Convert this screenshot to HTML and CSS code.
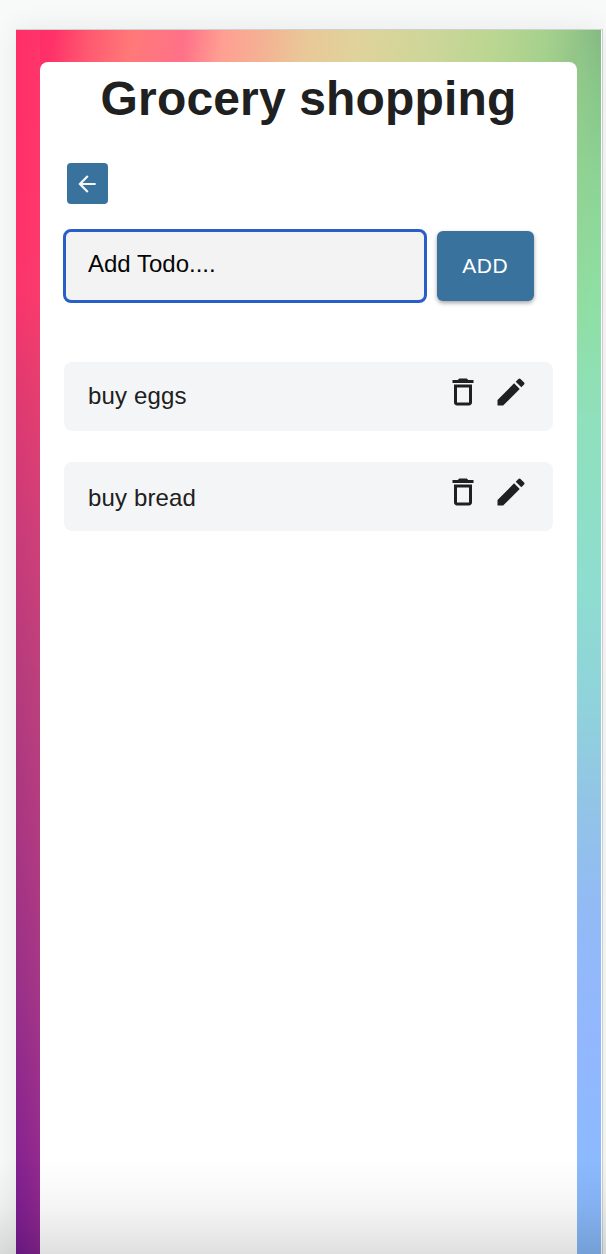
FILE: index.html
```html
<!DOCTYPE html>
<html lang="en">
<head>
<meta charset="utf-8">
<title>Grocery shopping</title>
<link rel="stylesheet" href="styles.css">
</head>
<body>
<svg class="sprite" aria-hidden="true">
  <symbol id="trash" viewBox="0 0 24 24"><path d="M6 19c0 1.1.9 2 2 2h8c1.1 0 2-.9 2-2V7H6v12zM8 9h8v10H8V9zm7.5-5l-1-1h-5l-1 1H5v2h14V4z"/></symbol>
  <symbol id="pencil" viewBox="0 0 24 24"><path d="M3 17.25V21h3.75L17.81 9.94l-3.75-3.75L3 17.25zM20.71 7.04c.39-.39.39-1.02 0-1.41l-2.34-2.34a.996.996 0 0 0-1.41 0l-1.83 1.83 3.75 3.75 1.83-1.83z"/></symbol>
  <symbol id="back" viewBox="0 0 24 24"><path d="M20 11H7.83l5.59-5.59L12 4l-8 8 8 8 1.41-1.41L7.83 13H20v-2z"/></symbol>
</svg>
<div class="frame">
  <main class="card">
    <h1 class="title">Grocery shopping</h1>
    <button class="back" aria-label="Back"><svg class="back-icon"><use href="#back"/></svg></button>
    <form class="entry">
      <input class="field" type="text" placeholder="Add Todo....">
      <button class="add" type="button">ADD</button>
    </form>
    <ul class="todos">
      <li class="todo"><span class="label">buy eggs</span><svg class="icon"><use href="#trash"/></svg><svg class="icon"><use href="#pencil"/></svg></li>
      <li class="todo todo-low"><span class="label">buy bread</span><svg class="icon"><use href="#trash"/></svg><svg class="icon"><use href="#pencil"/></svg></li>
    </ul>
  </main>
</div>
<div class="fade"></div>
</body>
</html>
```
FILE: styles.css
```css
* { box-sizing: border-box; }
body {
  margin: 0;
  height: 1254px;
  padding: 29px 3px 0 16px;
  overflow: hidden;
  font-family: "Liberation Sans", Arial, sans-serif;
  color: #202020;
  background: #f8faf9;
}
.sprite { position: absolute; width: 0; height: 0; }
/* multicolour backdrop: top strip plus left and right columns */
.frame {
  height: 1245px;
  padding: 32px 25px 0 24px;
  border-top: 1px solid #cfd1d1;
  border-right: 1px solid #cdcdcf;
  background:
    linear-gradient(#fff, #fff) right / 1px 100% no-repeat,
    linear-gradient(98deg, #ff2d68 0, #ff3268 14px, #ff5a70 51px, #ff7979 93px, #ff7188 144px, #ff9e92 182px, #f3b493 227px, #e9c897 265px, #dfd39b 320px, #cdd698 387px, #b9d691 455px, #a4d08d 505px, #92c487 537px) 24px 0 / 537px 42px no-repeat,
    linear-gradient(90deg, transparent, rgba(255,110,115,.12)) left / 24px 100% no-repeat,
    linear-gradient(#ff2d68 0, #ff306a 180px, #fa346c 260px, #e3386f 350px, #c93a79 500px, #b43a7d 650px, #a83582 800px, #982f89 960px, #882390 1110px, #7b1d92 1200px, #751b92 1224px) left top / 24px 100% no-repeat,
    radial-gradient(ellipse 24px 370px at 0 0, rgba(160,208,140,.5), transparent) 561px 0 / 24px 370px no-repeat,
    linear-gradient(#84b982 0, #86c68a 60px, #8bd496 150px, #8fdfa4 270px, #8fe0bc 390px, #8eddd0 560px, #90d2dc 680px, #92c5e5 770px, #92baf5 880px, #92b7ff 1010px, #8bbaff 1140px, #85b6f5 1224px) 561px 0 / 24px 100% no-repeat;
  box-shadow: 0 0 28px rgba(0,0,0,.07);
}
.card {
  height: 100%;
  padding: 0 24px;
  border-radius: 8px 8px 0 0;
  background: #fff;
}
.title {
  margin: 0 -20px;
  padding-top: 9px;
  font-size: 48px;
  line-height: 56px;
  letter-spacing: .15px;
  text-align: center;
  white-space: nowrap;
}
.back {
  display: grid;
  place-items: center;
  width: 40.5px;
  height: 41px;
  margin: 36px 0 0 3px;
  padding: 0;
  border: 0;
  border-radius: 4px;
  background: #39739d;
}
.back-icon { width: 26px; height: 26px; fill: #f4f6f8; }
.entry { display: flex; gap: 10px; margin: 25px 0 0 -1.5px; align-items: center; }
.field {
  width: 364.5px;
  height: 74px;
  padding: 0 22px 4px 22.5px;
  border: 3px solid #285ec8;
  border-radius: 8px;
  background: #f3f3f3;
  font: 24px "Liberation Sans", Arial, sans-serif;
}
.field::placeholder { color: #050505; opacity: 1; }
.add {
  width: 96.5px;
  height: 70px;
  padding: 0;
  border: 0;
  border-radius: 6px;
  background: #39739d;
  color: #fff;
  font: 21px "Liberation Sans", Arial, sans-serif;
  letter-spacing: .6px;
  box-shadow: 0 2px 4px rgba(0,0,0,.36);
}
.todos { display: grid; gap: 31px; margin: 58.7px 0 0; padding: 0; list-style: none; }
.todo {
  display: flex;
  align-items: flex-start;
  gap: 12px;
  height: 69.4px;
  padding: 12px 24px 0;
  border-radius: 8px;
  background: #f4f5f7;
}
.label { flex: 1; padding-top: 8px; font-size: 24px; line-height: 28px; letter-spacing: .15px; }
.todo-low .label { padding-top: 9.7px; }
.icon { width: 36px; height: 36px; fill: #202020; }
.fade {
  position: fixed;
  inset: auto 0 0;
  height: 94px;
  background: linear-gradient(transparent, rgba(0,0,0,.04) 50%, rgba(0,0,0,.12));
}
```
